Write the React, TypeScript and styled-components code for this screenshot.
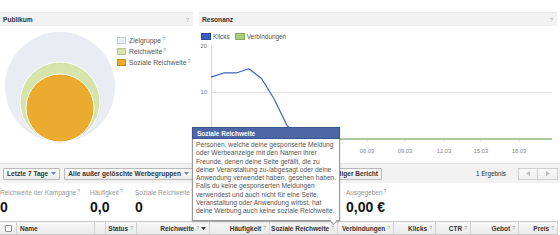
import React from 'react';
import styled, { createGlobalStyle } from 'styled-components';

const GlobalStyle = createGlobalStyle`
  html, body { margin: 0; padding: 0; background: #fff; }
  body { font-family: "Liberation Sans", Arial, sans-serif; color: #333; }
  * { box-sizing: border-box; }
`;

const Page = styled.div`
  position: relative;
  width: 560px;
  height: 235px;
  overflow: hidden;
`;

const TopStrip = styled.div`
  height: 12px;
  display: flex;
  align-items: flex-start;
  padding-left: 160px;
`;

const CutLink = styled.span`
  margin-top: -6px;
  font-size: 6.5px;
  color: #aaa;
`;

const Panels = styled.div`
  display: flex;
  gap: 6px;
  height: 151px;
`;

const Panel = styled.section<{ $width: number }>`
  width: ${p => p.$width}px;
  display: flex;
  flex-direction: column;
`;

const PanelHeader = styled.header`
  height: 14px;
  flex: none;
  background: #f2f2f2;
  border-top: 1px solid #e9e9e9;
  display: flex;
  align-items: center;
  justify-content: space-between;
  padding: 0 4px 0 3px;
  font-size: 6.6px;
  font-weight: bold;
  color: #333;
`;

const HelpMark = styled.span`
  font-size: 5.5px;
  font-weight: normal;
  color: #aaa;
`;

const Sup = styled.sup`
  font-size: 4.8px;
  color: #6d84b4;
  margin-left: 1px;
  vertical-align: 2.5px;
  line-height: 0;
`;

const AudienceBody = styled.div`
  display: flex;
`;

const Legend = styled.ul`
  list-style: none;
  margin: 0;
  padding: 11px 0 0 0;
  display: flex;
  flex-direction: column;
`;

const LegendItem = styled.li`
  height: 11px;
  display: flex;
  align-items: flex-start;
  gap: 3px;
  font-size: 6.8px;
  line-height: 7px;
  color: #555;
`;

const Swatch = styled.span<{ $fill: string; $edge: string; $w?: number }>`
  width: ${p => p.$w ?? 9}px;
  height: 7px;
  flex: none;
  background: ${p => p.$fill};
  border: 1px solid ${p => p.$edge};
`;

const ChartLegend = styled.div`
  display: flex;
  align-items: center;
  height: 9px;
  margin: 6px 0 0 2px;
  font-size: 6.4px;
  color: #555;
`;

const ChartLegendItem = styled.span`
  display: flex;
  align-items: center;
  gap: 2px;
  margin-right: 5px;
`;

const Toolbar = styled.div`
  height: 20px;
  background: #f2f2f2;
  border-top: 1px solid #e6e6e6;
  display: flex;
  align-items: center;
  padding: 0 2px 0 3px;
`;

const Button = styled.button<{ $ml?: number; $width?: number }>`
  height: 12px;
  margin: 0 0 0 ${p => p.$ml ?? 0}px;
  padding: 0 3px;
  ${p => (p.$width ? `width: ${p.$width}px; justify-content: flex-end;` : '')}
  display: inline-flex;
  align-items: center;
  gap: 3px;
  border: 1px solid #bababa;
  border-radius: 1px;
  background: linear-gradient(#ffffff, #ececec);
  font-family: inherit;
  font-size: 6.6px;
  font-weight: bold;
  color: #333;
  white-space: nowrap;
`;

const ResultCount = styled.span`
  margin-left: auto;
  font-size: 6.3px;
  color: #333;
`;

const Pager = styled.div`
  display: flex;
  margin-left: 12px;
`;

const PagerButton = styled.span`
  width: 20px;
  height: 12px;
  display: flex;
  align-items: center;
  justify-content: center;
  border: 1px solid #d0d0d0;
  background: linear-gradient(#fafafa, #efefef);
  & + & {
    border-left: none;
  }
`;

const Stats = styled.div`
  height: 38px;
  display: flex;
  padding-top: 6px;
`;

const Stat = styled.div<{ $width: number }>`
  width: ${p => p.$width}px;
  flex: none;
`;

const StatLabel = styled.div`
  font-size: 6.5px;
  line-height: 8px;
  color: #999;
  white-space: nowrap;
`;

const StatValue = styled.div`
  margin-top: 3px;
  font-size: 14px;
  line-height: 14px;
  font-weight: bold;
  color: #111;
`;

const TableHead = styled.div`
  height: 14px;
  width: 558px;
  display: grid;
  grid-template-columns: 17px 78px 11px 31px 73px 60px 68px 56px 42px 35px 48px 39px;
  background: linear-gradient(#f8f8f8, #ebebeb);
  border-top: 1px solid #c6c6c6;
  border-bottom: 1px solid #c6c6c6;
`;

const HeadCell = styled.div<{ $align?: string }>`
  display: flex;
  align-items: center;
  justify-content: ${p => p.$align ?? 'flex-end'};
  gap: 2px;
  padding: 0 3px;
  border-right: 1px solid #d2d2d2;
  font-size: 6.5px;
  font-weight: bold;
  color: #333;
  white-space: nowrap;
  overflow: hidden;
`;

const HeadHelp = styled.span`
  font-size: 5px;
  font-weight: normal;
  color: #999;
`;

const Checkbox = styled.span`
  width: 7px;
  height: 7px;
  border: 1px solid #8f8f8f;
  border-radius: 1px;
  background: #fff;
`;

const Tooltip = styled.div`
  position: absolute;
  left: 192px;
  top: 127px;
  width: 148px;
  box-shadow: 0 1px 2px rgba(0, 0, 0, 0.2);
  &::after {
    content: '';
    position: absolute;
    left: 139px;
    bottom: -3px;
    width: 4px;
    height: 4px;
    background: #fff;
    border-right: 1px solid #999;
    border-bottom: 1px solid #999;
    transform: rotate(45deg);
  }
`;

const TooltipTitle = styled.div`
  height: 12px;
  display: flex;
  align-items: center;
  padding-left: 4px;
  background: #4c67a3;
  border: 1px solid #3a5690;
  font-size: 6.5px;
  font-weight: bold;
  color: #fff;
`;

const TooltipBody = styled.div`
  background: #fff;
  border: 1px solid #999;
  border-top: none;
  padding: 2px 3px 4px 3px;
  font-size: 6.7px;
  line-height: 8.3px;
  color: #555;
`;

const TooltipLine = styled.span`
  display: block;
  white-space: nowrap;
`;

const Caret = () => (
  <svg width="5" height="3" viewBox="0 0 5 3">
    <path d="M0 0 H5 L2.5 3 Z" fill="#6d84b4" />
  </svg>
);

const Arrow = ({ dir }: { dir: 'left' | 'right' }) => (
  <svg width="4" height="5" viewBox="0 0 4 5">
    <path d={dir === 'left' ? 'M4 0 V5 L0 2.5 Z' : 'M0 0 V5 L4 2.5 Z'} fill="#bdbdbd" />
  </svg>
);

const Venn = () => (
  <svg width="117" height="117" viewBox="0 0 117 117">
    <circle cx="60" cy="61" r="55" fill="#e9edf3" />
    <circle cx="60" cy="76" r="40" fill="#d5e5ab" stroke="#fff" strokeWidth="1" />
    <circle cx="60" cy="82" r="34" fill="#eaab2e" stroke="#fff" strokeWidth="1" />
  </svg>
);

const clicks = [13.3, 14.2, 14.2, 15.1, 13, 8.6, 3, ...Array(21).fill(0)];
const X0 = 12;
const STEP = 12.63;
const BASE = 96;
const UNIT = 4.65;
const dates = [
  { x: 168, label: '06.03' },
  { x: 206, label: '09.03' },
  { x: 245, label: '12.03' },
  { x: 282, label: '15.03' },
  { x: 320, label: '18.03' },
];

const Chart = () => {
  const points = clicks.map((v, i) => `${X0 + i * STEP},${BASE - v * UNIT}`).join(' ');
  const end = X0 + (clicks.length - 1) * STEP;
  return (
    <svg width="358" height="115" viewBox="0 0 358 115" style={{ marginTop: 2 }}>
      <line x1={X0 + 0.5} y1="3" x2={X0 + 0.5} y2={BASE} stroke="#d6d6d6" />
      <line x1={X0} y1="49.5" x2={end} y2="49.5" stroke="#e2e2e2" />
      <g fontFamily="Liberation Sans, Arial, sans-serif" fontSize="5.8" fill="#777">
        <text x="8" y="5" textAnchor="end">20</text>
        <text x="8" y="51" textAnchor="end">10</text>
        {dates.map(d => (
          <text key={d.label} x={d.x} y="110" textAnchor="middle" fill="#888">
            {d.label}
          </text>
        ))}
      </g>
      {dates.map(d => (
        <line key={d.label} x1={d.x} y1={BASE} x2={d.x} y2={BASE + 3} stroke="#e0e0e0" />
      ))}
      <polyline points={points} fill="none" stroke="#3b62c4" strokeWidth="1.2" strokeLinejoin="round" />
      <line x1={X0} y1={BASE} x2={end} y2={BASE} stroke="#b6d08c" strokeWidth="1.3" />
    </svg>
  );
};

const tooltipLines = [
  'Personen, welche deine gesponserte Meldung',
  'oder Werbeanzeige mit den Namen ihrer',
  'Freunde, denen deine Seite gefällt, die zu',
  'deiner Veranstaltung zu-/abgesagt oder deine',
  'Anwendung verwendet haben, gesehen haben.',
  'Falls du keine gesponserten Meldungen',
  'verwendest und auch nicht für eine Seite,',
  'Veranstaltung oder Anwendung wirbst, hat',
  'deine Werbung auch keine soziale Reichweite.',
];

const columns: { label: string; align?: string; sort?: boolean; help?: boolean }[] = [
  { label: 'Name', align: 'flex-start' },
  { label: '', align: 'flex-start' },
  { label: 'Status', help: true },
  { label: 'Reichweite', help: true, sort: true },
  { label: 'Häufigkeit', help: true },
  { label: 'Soziale Reichweite', help: true },
  { label: 'Verbindungen', help: true },
  { label: 'Klicks', help: true },
  { label: 'CTR', help: true },
  { label: 'Gebot', help: true },
  { label: 'Preis', help: true },
];

const DarkCaret = () => (
  <svg width="5" height="3" viewBox="0 0 5 3">
    <path d="M0 0 H5 L2.5 3 Z" fill="#333" />
  </svg>
);

export default function App() {
  return (
    <>
      <GlobalStyle />
      <Page>
        <TopStrip>
          <CutLink>Details</CutLink>
        </TopStrip>

        <Panels>
          <Panel $width={193}>
            <PanelHeader>
              Publikum <HelpMark>?</HelpMark>
            </PanelHeader>
            <AudienceBody>
              <Venn />
              <Legend>
                <LegendItem>
                  <Swatch $fill="#e9edf3" $edge="#c8cfd9" />
                  <span>Zielgruppe<Sup>?</Sup></span>
                </LegendItem>
                <LegendItem>
                  <Swatch $fill="#d5e5ab" $edge="#b3c988" />
                  <span>Reichweite<Sup>?</Sup></span>
                </LegendItem>
                <LegendItem>
                  <Swatch $fill="#eaab2e" $edge="#c78d19" />
                  <span>Soziale Reichweite<Sup>?</Sup></span>
                </LegendItem>
              </Legend>
            </AudienceBody>
          </Panel>

          <Panel $width={358}>
            <PanelHeader>
              Resonanz <HelpMark>?</HelpMark>
            </PanelHeader>
            <ChartLegend>
              <ChartLegendItem>
                <Swatch $fill="#3b5ec0" $edge="#2b4a9b" $w={10} />
                Klicks
              </ChartLegendItem>
              <ChartLegendItem>
                <Swatch $fill="#a9c97f" $edge="#8aad60" $w={10} />
                Verbindungen
              </ChartLegendItem>
            </ChartLegend>
            <Chart />
          </Panel>
        </Panels>

        <Toolbar>
          <Button>
            Letzte 7 Tage <Caret />
          </Button>
          <Button $ml={4}>
            Alle außer gelöschte Werbegruppen <Caret />
          </Button>
          <Button $ml={99} $width={90}>
            Vollständiger Bericht
          </Button>
          <ResultCount>1 Ergebnis</ResultCount>
          <Pager>
            <PagerButton>
              <Arrow dir="left" />
            </PagerButton>
            <PagerButton>
              <Arrow dir="right" />
            </PagerButton>
          </Pager>
        </Toolbar>

        <Stats>
          <Stat $width={90}>
            <StatLabel>Reichweite der Kampagne<Sup>?</Sup></StatLabel>
            <StatValue>0</StatValue>
          </Stat>
          <Stat $width={45}>
            <StatLabel>Häufigkeit<Sup>?</Sup></StatLabel>
            <StatValue>0,0</StatValue>
          </Stat>
          <Stat $width={211}>
            <StatLabel>Soziale Reichweite<Sup>?</Sup></StatLabel>
            <StatValue>0</StatValue>
          </Stat>
          <Stat $width={100}>
            <StatLabel>Ausgegeben<Sup>?</Sup></StatLabel>
            <StatValue>0,00 €</StatValue>
          </Stat>
        </Stats>

        <TableHead>
          <HeadCell $align="center">
            <Checkbox />
          </HeadCell>
          {columns.map((c, i) => (
            <HeadCell key={i} $align={c.align}>
              {c.label}
              {c.help && <HeadHelp>?</HeadHelp>}
              {c.sort && <DarkCaret />}
            </HeadCell>
          ))}
        </TableHead>

        <Tooltip>
          <TooltipTitle>Soziale Reichweite</TooltipTitle>
          <TooltipBody>
            {tooltipLines.map(line => (
              <TooltipLine key={line}>{line}</TooltipLine>
            ))}
          </TooltipBody>
        </Tooltip>
      </Page>
    </>
  );
}
